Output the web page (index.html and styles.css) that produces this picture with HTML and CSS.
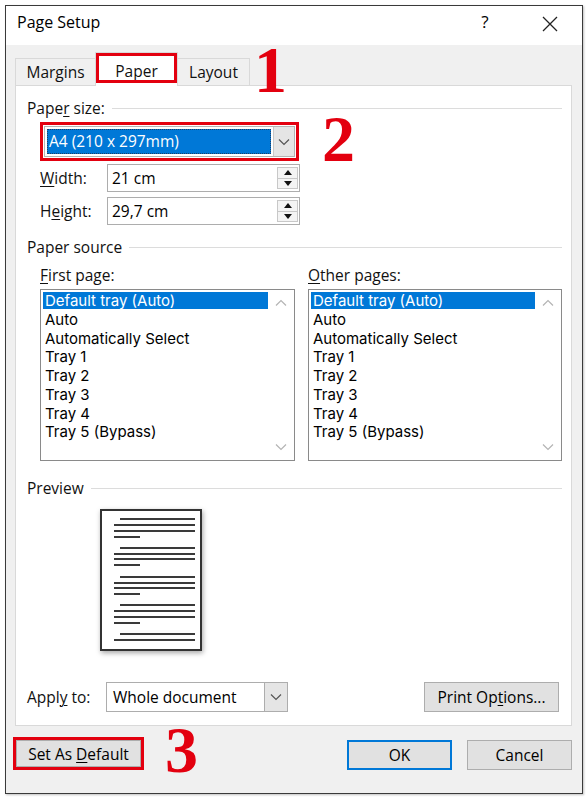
FILE: index.html
```html
<!DOCTYPE html>
<html lang="en">
<head>
    <meta charset="UTF-8">
    <meta name="viewport" content="width=device-width, initial-scale=1.0">
    <title>Page Setup</title>
    <link rel="stylesheet" href="styles.css">
</head>
<body>

    <div class="window">
        <div class="titlebar">
            <span class="title">Page Setup</span>
            <span class="help">?</span>
            <span class="close">
                <svg width="16" height="16" viewBox="0 0 16 16"><path d="M1 1L15 15M15 1L1 15" stroke="#222" stroke-width="1.3" fill="none"/></svg>
            </span>
        </div>

        <div class="tabs">
            <div class="tab">Margins</div>
            <div class="tab active">Paper</div>
            <div class="tab">Layout</div>
        </div>

        <div class="panel">
            <div class="group-title"><span>Pape<u>r</u> size:</span></div>
            <div class="mark-box paper-mark">
                <div class="combo">
                    <span class="combo-value focused">A4 (210 x 297mm)</span>
                    <span class="combo-btn">
                        <svg width="12" height="8" viewBox="0 0 12 8"><path d="M1 1.5L6 6.5L11 1.5" stroke="#555" stroke-width="1.2" fill="none"/></svg>
                    </span>
                </div>
            </div>

            <div class="field-row">
                <label><u>W</u>idth:</label>
                <div class="spin-input">
                    <span class="spin-value">21 cm</span>
                    <span class="spinner"><span class="up"></span><span class="down"></span></span>
                </div>
            </div>
            <div class="field-row">
                <label>H<u>e</u>ight:</label>
                <div class="spin-input">
                    <span class="spin-value">29,7 cm</span>
                    <span class="spinner"><span class="up"></span><span class="down"></span></span>
                </div>
            </div>

            <div class="group-title source-title"><span>Paper source</span></div>
            <div class="source-cols">
                <div class="source-col first">
                    <div class="list-label"><u>F</u>irst page:</div>
                    <div class="listbox">
                        <div class="items">
                            <div class="item selected">Default tray (Auto)</div>
                            <div class="item">Auto</div>
                            <div class="item">Automatically Select</div>
                            <div class="item">Tray 1</div>
                            <div class="item">Tray 2</div>
                            <div class="item">Tray 3</div>
                            <div class="item">Tray 4</div>
                            <div class="item">Tray 5 (Bypass)</div>
                        </div>
                        <div class="scroll">
                            <svg width="12" height="8" viewBox="0 0 12 8"><path d="M1 6.5L6 1.5L11 6.5" stroke="#b4b4b4" stroke-width="1.2" fill="none"/></svg>
                            <svg width="12" height="8" viewBox="0 0 12 8"><path d="M1 1.5L6 6.5L11 1.5" stroke="#b4b4b4" stroke-width="1.2" fill="none"/></svg>
                        </div>
                    </div>
                </div>
                <div class="source-col other">
                    <div class="list-label"><u>O</u>ther pages:</div>
                    <div class="listbox">
                        <div class="items">
                            <div class="item selected">Default tray (Auto)</div>
                            <div class="item">Auto</div>
                            <div class="item">Automatically Select</div>
                            <div class="item">Tray 1</div>
                            <div class="item">Tray 2</div>
                            <div class="item">Tray 3</div>
                            <div class="item">Tray 4</div>
                            <div class="item">Tray 5 (Bypass)</div>
                        </div>
                        <div class="scroll">
                            <svg width="12" height="8" viewBox="0 0 12 8"><path d="M1 6.5L6 1.5L11 6.5" stroke="#b4b4b4" stroke-width="1.2" fill="none"/></svg>
                            <svg width="12" height="8" viewBox="0 0 12 8"><path d="M1 1.5L6 6.5L11 1.5" stroke="#b4b4b4" stroke-width="1.2" fill="none"/></svg>
                        </div>
                    </div>
                </div>
            </div>

            <div class="group-title preview-title"><span>Preview</span></div>
            <div class="preview-page">
                <svg width="98" height="138" viewBox="0 0 98 138">
                    <g stroke="#3a3a3a" stroke-width="2">
                        <path d="M18 8H93M12 14H93M12 20H93M12 26H38"/>
                        <path d="M18 37H93M12 43H93M12 48H93M12 54H38"/>
                        <path d="M18 66H93M12 72H93M12 77H93M12 83H38"/>
                        <path d="M18 94H93M12 100H93M12 106H93M12 112H38"/>
                        <path d="M18 123H93M12 129H93"/>
                    </g>
                </svg>
            </div>

            <div class="apply-row">
                <label>Appl<u>y</u> to:</label>
                <div class="combo apply-combo">
                    <span class="combo-value">Whole document</span>
                    <span class="combo-btn">
                        <svg width="12" height="8" viewBox="0 0 12 8"><path d="M1 1.5L6 6.5L11 1.5" stroke="#555" stroke-width="1.2" fill="none"/></svg>
                    </span>
                </div>
                <button class="btn print-btn">Print Op<u>t</u>ions...</button>
            </div>
        </div>

        <div class="footer">
            <div class="mark-box default-mark">
                <button class="btn default-btn">Set As <u>D</u>efault</button>
            </div>
            <button class="btn ok-btn">OK</button>
            <button class="btn cancel-btn">Cancel</button>
        </div>

        <span class="callout callout-1">1</span>
        <span class="callout callout-2">2</span>
        <span class="callout callout-3">3</span>
    </div>

</body>
</html>
```

FILE: styles.css
```css
* {
    margin: 0;
    padding: 0;
    box-sizing: border-box;
}
body {
    background: #fff;
    font-family: "Open Sans", "Noto Sans", sans-serif;
    font-size: 15.5px;
    color: #000;
}
u {
    text-decoration-thickness: 1px;
    text-underline-offset: 2px;
}
.window {
    position: relative;
    width: 578px;
    height: 789px;
    margin: 5px;
    border: 1px solid #3a3a3a;
    background: #f0f0f0;
    display: flex;
    flex-direction: column;
    box-shadow: 1px 1px 2px rgba(0, 0, 0, 0.25);
}
.titlebar {
    height: 39px;
    background: #fff;
    display: flex;
    align-items: flex-start;
    padding: 5px 0 0 11px;
}
.title {
    font-size: 16px;
    line-height: 22px;
    flex: 1;
}
.help {
    font-size: 17px;
    line-height: 22px;
    width: 20px;
    text-align: center;
    margin-right: 47px;
}
.close {
    width: 16px;
    height: 16px;
    margin-top: 4px;
    margin-right: 24px;
}
.tabs {
    height: 40px;
    display: flex;
    align-items: flex-end;
    padding-left: 9px;
}
.tab {
    height: 27px;
    border: 1px solid #d9d9d9;
    border-bottom: none;
    padding: 3px 0 0;
    text-align: center;
    line-height: 20px;
    color: #111;
}
.tab:first-child {
    width: 80px;
    border-right: none;
}
.tab:last-child {
    width: 72px;
    border-left: none;
}
.tab.active {
    position: relative;
    width: 83px;
    height: 34px;
    margin-bottom: -1px;
    background: #fff;
    padding-top: 8px;
    z-index: 1;
}
.tab.active::after {
    content: "";
    position: absolute;
    left: 0;
    right: 0;
    top: 0;
    bottom: 3px;
    border: 3px solid #e3000f;
}
.panel {
    height: 641px;
    margin: 0 10px 0 9px;
    border: 1px solid #d9d9d9;
    background: #fff;
    padding: 12px 9px 0 11px;
}
.group-title {
    display: flex;
    align-items: center;
    gap: 7px;
    height: 20px;
    line-height: 20px;
    color: #111;
}
.group-title::after {
    content: "";
    flex: 1;
    height: 1px;
    background: #dcdcdc;
}
.mark-box {
    border: 3px solid #e3000f;
}
.paper-mark {
    width: 259px;
    margin: 4px 0 0 13px;
    padding: 1px;
}
.combo {
    display: flex;
    height: 31px;
    border: 1px solid #b4b4b4;
    background: #fff;
}
.combo-value {
    flex: 1;
    line-height: 25px;
    padding-left: 4px;
    margin: 2px;
    white-space: nowrap;
}
.combo-value.focused {
    background: #0078d7;
    color: #fff;
    padding-left: 2px;
    outline: 1px dotted #1c3f66;
    outline-offset: -1px;
}
.combo-btn {
    width: 21px;
    background: #e5e5e5;
    border-left: 1px solid #c8c8c8;
    display: flex;
    align-items: center;
    justify-content: center;
}
.field-row {
    display: flex;
    align-items: center;
    margin: 3px 0 0 13px;
}
.field-row + .field-row {
    margin-top: 5px;
}
.field-row label {
    width: 67px;
    color: #111;
}
.spin-input {
    width: 193px;
    height: 28px;
    border: 1px solid #adadad;
    display: flex;
}
.spin-value {
    flex: 1;
    line-height: 26px;
    padding-left: 4px;
}
.spinner {
    width: 22px;
    display: flex;
    flex-direction: column;
    padding: 2px 1px 2px 0;
}
.spinner span {
    flex: 1;
    border: 1px solid #c8c8c8;
    background: #f4f4f4;
    display: flex;
    align-items: center;
    justify-content: center;
}
.spinner .down {
    border-top: none;
}
.spinner .up::before {
    content: "";
    border-left: 4px solid transparent;
    border-right: 4px solid transparent;
    border-bottom: 5px solid #111;
}
.spinner .down::before {
    content: "";
    border-left: 4px solid transparent;
    border-right: 4px solid transparent;
    border-top: 5px solid #111;
}
.source-title {
    margin-top: 12px;
}
.source-cols {
    display: flex;
    gap: 13px;
    margin: 8px 0 0 13px;
}
.source-col.first {
    width: 255px;
}
.source-col.other {
    width: 254px;
}
.list-label {
    height: 20px;
    line-height: 20px;
    color: #111;
}
.listbox {
    margin-top: 4px;
    height: 172px;
    border: 1px solid #8a8a8a;
    display: flex;
}
.items {
    flex: 1;
    padding: 2px 0 0 2px;
}
.item {
    font-family: Inter, "Open Sans", sans-serif;
    font-size: 15px;
    line-height: 18.75px;
    padding-left: 2px;
    white-space: nowrap;
}
.item.selected {
    background: #0078d7;
    color: #fff;
    height: 17px;
    line-height: 17px;
    margin-bottom: 1.75px;
}
.scroll {
    width: 26px;
    display: flex;
    flex-direction: column;
    justify-content: space-between;
    align-items: center;
    padding: 9px 0 9px;
}
.preview-title {
    margin-top: 17px;
}
.preview-page {
    width: 102px;
    height: 142px;
    margin: 11px 0 0 73px;
    border: 2px solid #333;
    background: #fff;
    box-shadow: 1px 2px 5px rgba(0, 0, 0, 0.35);
}
.preview-page svg {
    display: block;
}
.apply-row {
    display: flex;
    align-items: center;
    margin-top: 31px;
}
.apply-row label {
    width: 79px;
    color: #111;
}
.apply-combo {
    width: 182px;
    height: 30px;
    border-color: #adadad;
}
.apply-combo .combo-value {
    line-height: 24px;
    padding-left: 4px;
}
.apply-combo .combo-btn {
    width: 23px;
    border-left-color: #adadad;
}
.btn {
    font-family: inherit;
    font-size: 15.5px;
    color: #000;
    background: #e1e1e1;
    border: 1px solid #adadad;
    height: 30px;
}
.print-btn {
    width: 135px;
    margin-left: auto;
    margin-right: 3px;
}
.footer {
    flex: 1;
    display: flex;
    align-items: flex-start;
    padding: 11px 10px 0 7px;
}
.default-mark {
    width: 131px;
    height: 33px;
}
.default-btn {
    width: 125px;
    height: 27px;
}
.ok-btn {
    width: 105px;
    margin: 3px 0 0 auto;
    border: 2px solid #0078d7;
}
.cancel-btn {
    width: 105px;
    margin: 3px 0 0 15px;
}
/* Red step numbers drawn over the dialog */
.callout {
    position: absolute;
    font-family: "Liberation Serif", "Times New Roman", serif;
    font-weight: bold;
    font-size: 66px;
    line-height: 66px;
    color: #e3000f;
}
.callout-1 {
    left: 248px;
    top: 31px;
}
.callout-2 {
    left: 316px;
    top: 100px;
}
.callout-3 {
    left: 159px;
    top: 711px;
}
```
